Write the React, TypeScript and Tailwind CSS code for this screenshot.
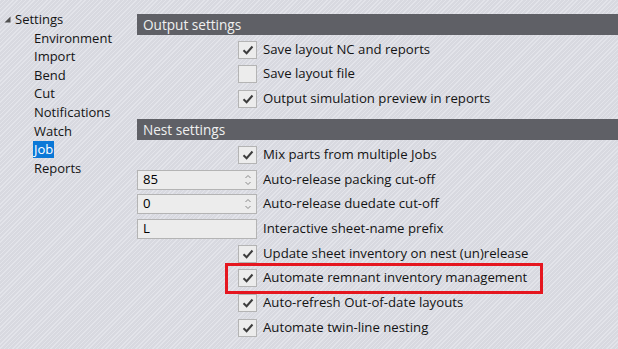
import React from "react";

const bg =
  "bg-[repeating-linear-gradient(135deg,#e3e4ea_0px,#e3e4ea_1px,#d8d9e0_1px,#d8d9e0_3px)]";

function Check({ checked }: { checked: boolean }) {
  return (
    <div className="w-[19px] h-[18px] bg-[#ececec] border border-[#b4b4b4] flex items-center justify-center shrink-0">
      {checked && (
        <svg width="12" height="10" viewBox="0 0 12 10">
          <path d="M1.5 5.2 L4.6 8.2 L10.5 1.5" fill="none" stroke="#3c3c3c" strokeWidth="2" />
        </svg>
      )}
    </div>
  );
}

function Spin() {
  return (
    <svg width="8" height="14" viewBox="0 0 8 14" className="shrink-0">
      <path d="M1.5 5 L4 2.5 L6.5 5" fill="none" stroke="#8a8a8a" strokeWidth="1" />
      <path d="M1.5 9 L4 11.5 L6.5 9" fill="none" stroke="#8a8a8a" strokeWidth="1" />
    </svg>
  );
}

function Input({ value, spin }: { value: string; spin?: boolean }) {
  return (
    <div className="w-[120px] h-[20px] bg-[#ececec] border border-[#b4b4b4] flex items-center pl-[5px] pr-[4px]">
      <span className="flex-1 text-black">{value}</span>
      {spin && <Spin />}
    </div>
  );
}

function Row({
  h,
  checked,
  input,
  spin,
  label,
  children,
}: {
  h: string;
  checked?: boolean;
  input?: string;
  spin?: boolean;
  label: string;
  children?: React.ReactNode;
}) {
  return (
    <div className={`relative flex items-center ${h}`}>
      <div className="w-[120px] flex justify-end shrink-0">
        {input !== undefined ? <Input value={input} spin={spin} /> : <Check checked={!!checked} />}
      </div>
      <span className="ml-[6px] text-[#141414] whitespace-nowrap">{label}</span>
      {children}
    </div>
  );
}

export default function App() {
  const tree = ["Environment", "Import", "Bend", "Cut", "Notifications", "Watch", "Job", "Reports"];
  return (
    <div
      className={`w-[618px] h-[349px] overflow-hidden flex ${bg} text-[13.2px] text-[#141414]`}
      style={{ fontFamily: '"Open Sans", "Noto Sans", sans-serif' }}
    >
      <div className="w-[137px] shrink-0 pt-[10px] leading-[18.6px] text-[13px]">
        <div className="flex items-center h-[18.6px]">
          <svg width="7" height="7" viewBox="0 0 7 7" className="ml-[4px] mr-[4px]">
            <path d="M6.5 0.5 L6.5 6.5 L0.5 6.5 Z" fill="#505050" />
          </svg>
          <span>Settings</span>
        </div>
        {tree.map((t) => (
          <div key={t} className="h-[18.6px] pl-[33px] flex items-center">
            {t === "Job" ? (
              <span className="bg-[#0a78d7] text-white px-[1px] h-[17px] leading-[17px]">{t}</span>
            ) : (
              <span className="px-[1px]">{t}</span>
            )}
          </div>
        ))}
      </div>
      <div className="flex-1 pt-[14px]">
        <div className="h-[21px] bg-[#5f6066] text-[#f0f0f0] pl-[6px] leading-[21px] text-[13.6px]">
          Output settings
        </div>
        <div className="mt-[2.5px]">
          <Row h="h-[24.5px]" checked label="Save layout NC and reports" />
          <Row h="h-[24.5px]" checked={false} label="Save layout file" />
          <Row h="h-[24.5px]" checked label="Output simulation preview in reports" />
        </div>
        <div className="mt-[8px] h-[21px] bg-[#5f6066] text-[#f0f0f0] pl-[6px] leading-[21px] text-[13.6px]">
          Nest settings
        </div>
        <div className="mt-[2.5px]">
          <Row h="h-[24.7px]" checked label="Mix parts from multiple Jobs" />
          <Row h="h-[24.7px]" input="85" spin label="Auto-release packing cut-off" />
          <Row h="h-[24.7px]" input="0" spin label="Auto-release duedate cut-off" />
          <Row h="h-[24.7px]" input="L" label="Interactive sheet-name prefix" />
          <Row h="h-[24.7px]" checked label="Update sheet inventory on nest (un)release" />
          <Row h="h-[24.7px]" checked label="Automate remnant inventory management">
            <div className="absolute left-[88px] top-[-3px] w-[318px] h-[31px] border-[3px] border-[#e5161f]" />
          </Row>
          <Row h="h-[24.7px]" checked label="Auto-refresh Out-of-date layouts" />
          <Row h="h-[24.7px]" checked label="Automate twin-line nesting" />
        </div>
      </div>
    </div>
  );
}
